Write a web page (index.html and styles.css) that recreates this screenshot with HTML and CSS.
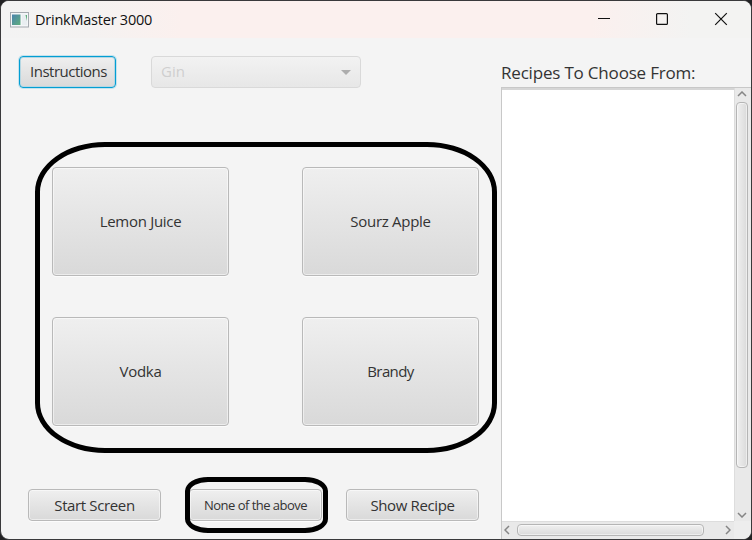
FILE: index.html
```
<!DOCTYPE html>
<html lang="en">
<head>
<meta charset="utf-8">
<title>DrinkMaster 3000</title>
<link rel="stylesheet" href="styles.css">
</head>
<body>
<div class="window">
  <header class="titlebar">
    <svg class="app-icon" width="19" height="16" viewBox="0 0 19 16">
      <defs><linearGradient id="pane" x1="0" y1="0" x2="1" y2="1"><stop offset="0" stop-color="#4a83ae"/><stop offset="1" stop-color="#5fae7c"/></linearGradient></defs>
      <rect x=".5" y=".5" width="18" height="14.5" fill="#f4f6f8" stroke="#a5aab0"/>
      <rect x="2" y="2.5" width="8.500" height="10.500" fill="url(#pane)"/>
      <rect x="12" y="2.500" width="5" height="10.500" fill="#e9eef1"/>
      <path d="M15.500 3h1.500v6z" fill="#5fae7c"/>
    </svg>
    <h1 class="title">DrinkMaster 3000</h1>
    <svg class="controls" width="131" height="14" viewBox="0 0 131 14" fill="none" stroke="#111" stroke-width="1.200">
      <path d="M0 6.500h12" stroke-width="1"/>
      <rect x="58.600" y="1.600" width="10.800" height="10.800" rx="1"/>
      <path d="M117.200 1.200l11.600 11.600M128.800 1.200l-11.600 11.600"/>
    </svg>
  </header>
  <main class="content">
    <section class="picker">
      <div class="toolbar">
        <button class="btn focused"><span>Instructions</span></button>
        <div class="combo"><span>Gin</span><svg width="10" height="5" viewBox="0 0 10 5"><path d="M0 0h10L5 5z" fill="#adadad"/></svg></div>
      </div>
      <div class="choices">
        <button class="btn"><span>Lemon Juice</span></button>
        <button class="btn"><span>Sourz Apple</span></button>
        <button class="btn"><span>Vodka</span></button>
        <button class="btn tight"><span>Brandy</span></button>
        <div class="ring ring-large"></div>
      </div>
      <div class="actions">
        <button class="btn"><span>Start Screen</span></button>
        <button class="btn small"><span>None of the above</span><i class="ring ring-small"></i></button>
        <button class="btn"><span>Show Recipe</span></button>
      </div>
    </section>
    <aside class="recipes">
      <h2 class="label">Recipes To Choose From:</h2>
      <div class="list">
        <div class="view"></div>
        <div class="bar vertical">
          <svg width="10" height="6" viewBox="0 0 10 6"><path d="M1 5l4-4 4 4"/></svg>
          <div class="thumb"></div>
          <svg width="10" height="6" viewBox="0 0 10 6"><path d="M1 1l4 4 4-4"/></svg>
        </div>
        <div class="bar horizontal">
          <svg width="6" height="10" viewBox="0 0 6 10"><path d="M5 1L1 5l4 4"/></svg>
          <div class="thumb"></div>
          <svg width="6" height="10" viewBox="0 0 6 10"><path d="M1 1l4 4-4 4"/></svg>
        </div>
        <div class="corner"></div>
      </div>
    </aside>
  </main>
</div>
</body>
</html>
```
FILE: styles.css
```
* { box-sizing: border-box; }
body { margin: 0; background: #222224; font-family: "Open Sans", "Noto Sans", sans-serif; color: #333; overflow: hidden; }
.window { width: 752px; height: 540px; border: 1px solid #39393b; border-radius: 9px; background: #f4f4f4; overflow: hidden; }
.titlebar { height: 37px; display: flex; align-items: center; padding: 0 22px 0 9px; background: linear-gradient(90deg, #f3f3f3 0, #f4f2f1 90px, #fbf0ee 180px, #fbf0ee 590px, #f3f3f2 690px); }
.app-icon { flex: none; }
.title { margin: 0 auto 0 6px; font-size: 14.5px; font-weight: 400; line-height: 20px; color: #111; letter-spacing: -.23px; white-space: nowrap; }
.controls { flex: none; margin-top: -1px; }
.content { display: grid; grid-template-columns: 500px 250px; height: 501px; }
.toolbar { display: flex; gap: 35px; padding: 18px 0 0 18px; }
.btn { position: relative; display: flex; align-items: center; justify-content: center; padding: 0 0 2px; margin: 0; border: 1px solid #b9b9b9; border-radius: 4px; background: linear-gradient(#efefef, #d9d9d9); box-shadow: inset 0 0 0 1px rgba(255,255,255,.5), 0 1px 0 #fcfcfc; font: 15px/20px "Open Sans", "Noto Sans", sans-serif; color: #333; white-space: nowrap; }
.btn span { letter-spacing: -.3px; }
.btn.tight span { letter-spacing: -.6px; }
.btn.focused { width: 97px; height: 32px; padding-left: 2px; border-color: #039ed3; box-shadow: 0 0 0 1px #c3e3ee, inset 0 0 0 1px #b5d7e3; }
.btn.focused span { letter-spacing: -.5px; }
.combo { width: 210px; height: 32px; display: flex; align-items: center; justify-content: space-between; padding: 0 9px; border: 1px solid #d9d9d9; border-radius: 4px; background: linear-gradient(#f2f2f2, #e7e7e7); font-size: 15px; color: #cfcfcf; }
.combo span { padding-bottom: 2px; }
.choices { position: relative; display: grid; grid-template-columns: 177px 177px; grid-auto-rows: 109px; gap: 41px 73px; padding: 79px 0 0 51px; }
.actions { display: grid; grid-template-columns: 133px 133px 133px; column-gap: 24px; padding: 63px 0 0 27px; }
.actions .btn { height: 32px; padding-bottom: 1px; }
.actions .btn span { letter-spacing: -.37px; }
.actions .btn:nth-child(n+2) { margin-left: 4px; margin-right: -4px; }
.btn.small { font-size: 13px; }
.actions .btn.small span { letter-spacing: -.53px; }
.ring { position: absolute; border: 5px solid #000; pointer-events: none; }
.ring-large { left: 34px; top: 54px; width: 462px; height: 311px; border-radius: 70px / 50px; }
.ring-small { left: -5px; top: -13px; width: 143px; height: 56px; border-radius: 23px / 14px; }
.recipes { display: flex; flex-direction: column; }
.label { margin: 0; height: 49px; padding-top: 23px; font-size: 17px; font-weight: 400; line-height: 24px; letter-spacing: -.19px; white-space: nowrap; }
.list { flex: 1; display: grid; grid-template-columns: 232px 17px; grid-template-rows: 433px 18px; border-left: 1px solid #c8c8c8; border-top: 1px solid #c8c8c8; background: #ededed; }
.view { border-top: 2px solid #d6d6d6; background: #fff; }
.bar { display: flex; align-items: center; background: #e9e9e9; }
.bar svg { fill: none; stroke: #858585; stroke-width: 1.500; flex: none; }
.vertical { flex-direction: column; padding: 3px 2px 3px 0; border-left: 1px solid #ddd; justify-content: space-between; }
.vertical .thumb { width: 12px; height: 366px; margin: 5px 0 auto; background: linear-gradient(90deg, #f0f0f0, #dadada); }
.horizontal { padding: 0 3px 1px 2px; border-top: 1px solid #ddd; }
.horizontal .thumb { width: 187px; height: 12px; margin: 0 auto 0 7px; background: linear-gradient(#f0f0f0, #dadada); }
.thumb { border: 1px solid #b5b5b5; border-radius: 4px; box-shadow: inset 0 0 0 1px rgba(255,255,255,.5); }
```
